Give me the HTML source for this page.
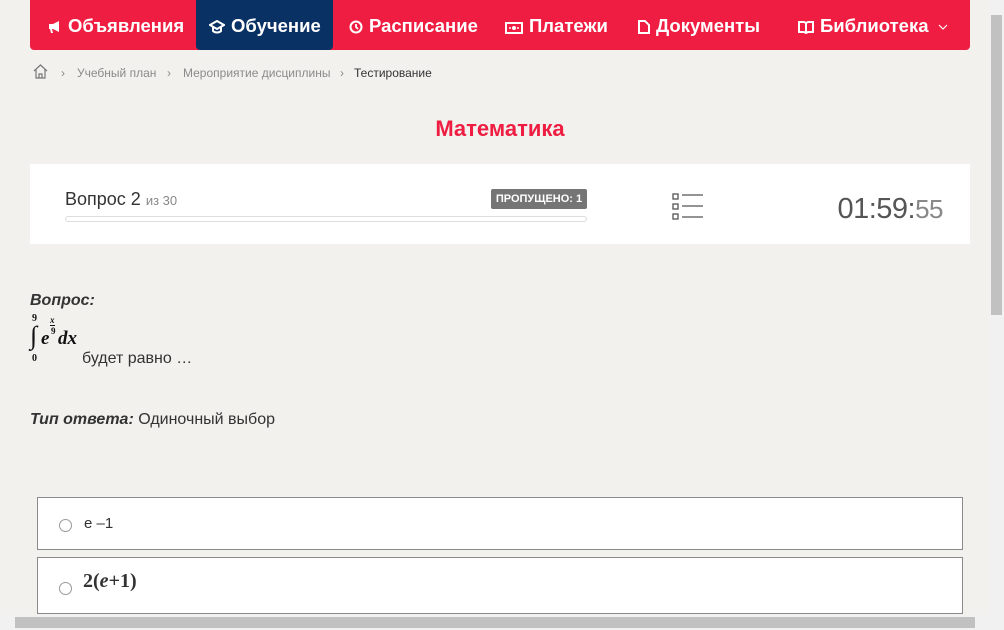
<!DOCTYPE html>
<html><head><meta charset="utf-8"><style>
*{box-sizing:border-box;margin:0;padding:0}
body{width:1004px;height:630px;overflow:hidden;background:#f2f1ee;font-family:"Liberation Sans",sans-serif;color:#333;position:relative}
.nav{position:absolute;left:30px;top:0;width:940px;height:50px;background:#ee1d41;border-radius:0 0 4px 4px}
.item{position:absolute;top:0;height:50px;line-height:51px;color:#fff;font-size:18.5px;font-weight:bold;white-space:nowrap}
.item svg{vertical-align:-2px;margin-right:6px}
.act{background:#0a3164;border-radius:0 0 4px 4px}
.bc{position:absolute;top:66px;font-size:12px;color:#8a8a8a}
.card{position:absolute;left:30px;top:164px;width:940px;height:80px;background:#fff}
.opt{position:absolute;left:37px;width:926px;background:#fff;border:1px solid #8a8a8a}
.radio{position:absolute;left:21px;width:13px;height:13px;border:1px solid #999;border-radius:50%;background:#fff}
</style></head><body>
<div class="nav">
 <div class="item" style="left:18px"><svg width="14" height="14" viewBox="0 0 14 14"><path d="M1 4h4l6-3v11l-6-3H4l1 4H3L2 9H1z" fill="#fff"/></svg>Объявления</div>
 <div class="item act" style="left:166px;width:137px;padding-left:13px"><svg width="16" height="14" viewBox="0 0 16 14"><path d="M8 1L1 5l7 4 7-4z M4 7v4c2 2 6 2 8 0V7" fill="none" stroke="#fff" stroke-width="2"/></svg>Обучение</div>
 <div class="item" style="left:319px"><svg width="14" height="14" viewBox="0 0 14 14"><circle cx="7" cy="7" r="5.5" fill="none" stroke="#fff" stroke-width="2"/><path d="M7 4v3l2 2" stroke="#fff" stroke-width="1.8" fill="none"/></svg>Расписание</div>
 <div class="item" style="left:475px"><svg width="18" height="12" viewBox="0 0 18 12"><rect x="1" y="1" width="16" height="10" fill="none" stroke="#fff" stroke-width="2"/><circle cx="9" cy="6" r="2" fill="#fff"/><circle cx="5" cy="6" r="1" fill="#fff"/><circle cx="13" cy="6" r="1" fill="#fff"/></svg>Платежи</div>
 <div class="item" style="left:608px"><svg width="12" height="14" viewBox="0 0 12 14"><path d="M1 1h6l4 4v8H1z" fill="none" stroke="#fff" stroke-width="2"/></svg>Документы</div>
 <div class="item" style="left:768px"><svg width="16" height="14" viewBox="0 0 16 14"><path d="M1 2h5l2 1 2-1h5v10h-5l-2 1-2-1H1zM8 3v10" fill="none" stroke="#fff" stroke-width="2"/></svg>Библиотека <svg width="10" height="6" viewBox="0 0 10 6" style="margin-left:4px;vertical-align:2px"><path d="M1 1l4 4 4-4" fill="none" stroke="#fff" stroke-width="1.2"/></svg></div>
</div>
<svg style="position:absolute;left:33px;top:64px" width="15" height="15" viewBox="0 0 15 15"><path d="M1 7L7.5 1 14 7M3 5v9h9V5M6 14v-4h3v4" fill="none" stroke="#777" stroke-width="1.2"/></svg>
<div class="bc" style="left:61px">›</div><div class="bc" style="left:77px">Учебный план</div>
<div class="bc" style="left:167px">›</div><div class="bc" style="left:183px">Мероприятие дисциплины</div>
<div class="bc" style="left:340px">›</div><div class="bc" style="left:354px;color:#333">Тестирование</div>
<div style="position:absolute;left:0;width:1000px;top:116px;text-align:center;color:#ee1d41;font-size:22px;font-weight:bold">Математика</div>
<div class="card">
 <div style="position:absolute;left:35px;top:25px;font-size:18px;color:#333">Вопрос 2 <span style="font-size:13px;color:#888">из 30</span></div>
 <div style="position:absolute;left:461px;top:25px;width:96px;height:20px;background:#757575;border-radius:2px;color:#fff;font-size:11px;font-weight:bold;text-align:center;line-height:20px">ПРОПУЩЕНО: 1</div>
 <div style="position:absolute;left:35px;top:52px;width:522px;height:6px;border:1px solid #ddd;border-radius:3px"></div>
 <svg style="position:absolute;left:642px;top:29px" width="32" height="28" viewBox="0 0 32 28"><g fill="none" stroke="#555" stroke-width="1.3"><rect x="1" y="1" width="5" height="5"/><rect x="1" y="11" width="5" height="5"/><rect x="1" y="21" width="5" height="5"/><path d="M10 2h21M10 13h21M10 24h21"/></g></svg>
 <div style="position:absolute;right:27px;top:29px;font-size:29px;color:#555;letter-spacing:-0.5px">01:59:<span style="color:#888;font-size:26px">55</span></div>
</div>
<div style="position:absolute;left:30px;top:292px;font-size:16px;font-weight:bold;font-style:italic">Вопрос:</div>
<div style="position:absolute;left:30px;top:313px;font-family:'Liberation Serif',serif;font-weight:bold;color:#111">
 <span style="position:absolute;left:2px;top:0;font-size:10px">9</span>
 <span style="position:absolute;left:0;top:8px;font-size:26px;font-weight:normal">∫</span>
 <span style="position:absolute;left:2px;top:40px;font-size:10px">0</span>
 <span style="position:absolute;left:11px;top:15px;font-size:19px;font-style:italic">e</span>
 <span style="position:absolute;left:20px;top:2px;font-size:9px;font-style:italic;border-bottom:1px solid #111;line-height:10px">x</span>
 <span style="position:absolute;left:21px;top:13px;font-size:9px">9</span>
 <span style="position:absolute;left:28px;top:15px;font-size:19px;font-style:italic;white-space:nowrap">dx</span>
</div>
<div style="position:absolute;left:82px;top:350px;font-size:16px">будет равно …</div>
<div style="position:absolute;left:30px;top:411px;font-size:16px"><b><i>Тип ответа:</i></b> Одиночный выбор</div>
<div class="opt" style="top:497px;height:53px"><div class="radio" style="top:21px"></div><div style="position:absolute;left:46px;top:17px;font-size:15px">e –1</div></div>
<div class="opt" style="top:557px;height:57px"><div class="radio" style="top:24px"></div><div style="position:absolute;left:45px;top:12px;font-size:20px;font-weight:bold;font-family:'Liberation Serif',serif">2(<i>e</i>+1)</div></div>
<div style="position:absolute;right:0;top:0;width:15px;height:615px;background:#f1f1f1"><div style="position:absolute;left:2px;top:15px;width:11px;height:300px;background:#c1c1c1"></div></div>
<div style="position:absolute;left:0;bottom:0;width:1004px;height:15px;background:#f1f1f1"><div style="position:absolute;left:15px;top:2px;width:960px;height:11px;background:#c1c1c1"></div></div>
</body></html>
